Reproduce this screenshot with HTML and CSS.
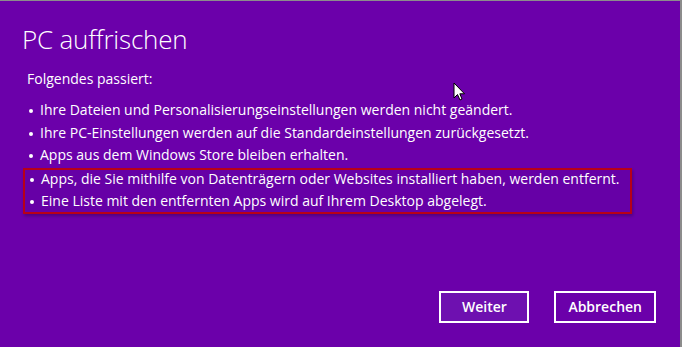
FILE: index.html
```html
<!DOCTYPE html>
<html lang="de">
<head>
  <meta charset="UTF-8">
  <title>PC auffrischen</title>
  <link rel="stylesheet" href="styles.css">
</head>
<body>
  <div class="dialog">
    <h1>PC auffrischen</h1>
    <p class="intro">Folgendes passiert:</p>
    <ul class="changes">
      <li>Ihre Dateien und Personalisierungseinstellungen werden nicht geändert.</li>
      <li>Ihre PC-Einstellungen werden auf die Standardeinstellungen zurückgesetzt.</li>
      <li>Apps aus dem Windows Store bleiben erhalten.</li>
    </ul>
    <ul class="changes marked">
      <li>Apps, die Sie mithilfe von Datenträgern oder Websites installiert haben, werden entfernt.</li>
      <li>Eine Liste mit den entfernten Apps wird auf Ihrem Desktop abgelegt.</li>
    </ul>
    <div class="actions">
      <button class="btn">Weiter</button>
      <button class="btn">Abbrechen</button>
    </div>

    <!-- mauszeiger -->
    <svg class="cursor" width="14" height="20" viewBox="0 0 14 20">
      <path d="M1 1 L1 16 L4.5 12.5 L7 18 L9 17 L6.8 11.8 L11.5 11.8 Z" fill="#fff" stroke="#000" stroke-width="1"/>
    </svg>
  </div>
</body>
</html>
```

FILE: styles.css
```css
* {
  margin: 0;
  padding: 0;
  box-sizing: border-box;
}

body {
  font-family: "Open Sans", "Noto Sans", sans-serif;
  background: #8c8c8c;
  width: 682px;
  height: 347px;
  overflow: hidden;
}

.dialog {
  position: relative;
  height: 347px;
  margin-top: 1px;
  margin-right: 2px;
  background: #6b00aa;
  color: #fff;
  padding: 20px 0 0 22px;
}

h1 {
  font-weight: 300;
  font-size: 26px;
  line-height: 36px;
  letter-spacing: -0.2px;
}

.intro {
  font-size: 14px;
  line-height: 20px;
  margin: 12px 0 10px 5px;
}

.changes {
  list-style: none;
  font-size: 14px;
  line-height: 22.5px;
  padding-left: 5px;
}

.changes li {
  position: relative;
  padding-left: 13px;
}

.changes li::before {
  content: "";
  position: absolute;
  left: 2px;
  top: 10px;
  width: 4px;
  height: 4px;
  border-radius: 50%;
  background: #fff;
}

.marked {
  width: 609px;
  margin: 1px 0 0 1px;
  padding: 0 0 0 3px;
  line-height: 22px;
  border: 2px solid #b80018;
  background: #6600a6;
  box-shadow: 1px 2px 3px rgba(0, 0, 0, 0.25);
}

.marked li:first-child {
  margin-top: -2px;
}

.actions {
  display: flex;
  justify-content: flex-end;
  gap: 25px;
  margin: 77px 24px 0 0;
}

.btn {
  font-family: inherit;
  font-size: 14px;
  font-weight: 600;
  color: #fff;
  background: #6b00aa;
  border: 2px solid #fff;
  height: 32px;
  padding: 0 12px;
  min-width: 90px;
}

.btn:first-child {
  background: #6e10b0;
}

.cursor {
  position: absolute;
  left: 453px;
  top: 81px;
}
```
